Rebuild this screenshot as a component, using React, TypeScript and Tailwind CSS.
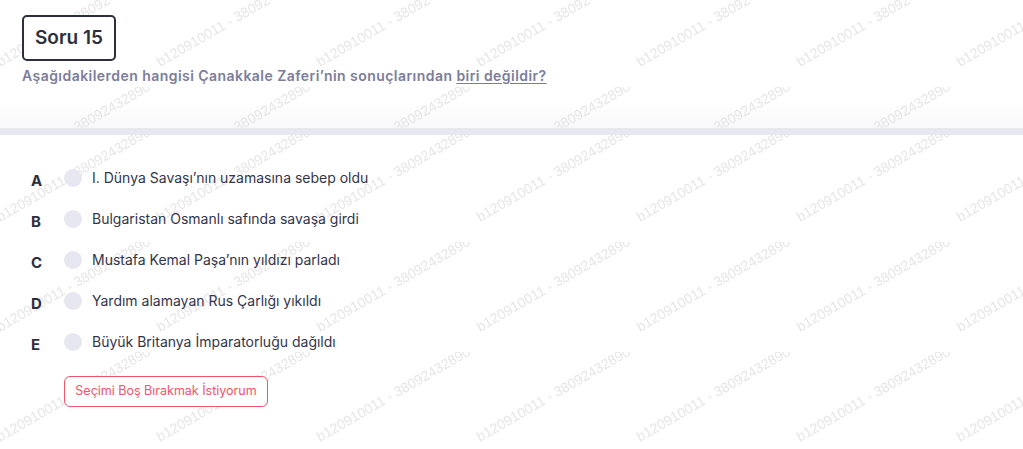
const options = [
  { key: "A", text: "I. Dünya Savaşı’nın uzamasına sebep oldu" },
  { key: "B", text: "Bulgaristan Osmanlı safında savaşa girdi" },
  { key: "C", text: "Mustafa Kemal Paşa’nın yıldızı parladı" },
  { key: "D", text: "Yardım alamayan Rus Çarlığı yıkıldı" },
  { key: "E", text: "Büyük Britanya İmparatorluğu dağıldı" },
];

function Watermark({ id, offsetY }: { id: string; offsetY: number }) {
  return (
    <svg className="pointer-events-none absolute inset-0 h-full w-full" aria-hidden="true">
      <defs>
        <pattern id={id} width="160" height="110" patternUnits="userSpaceOnUse" x="-5" y={offsetY}>
          <text
            transform="translate(5 90) rotate(-30)"
            fontSize="14"
            fill="#e6e6e6"
            fontFamily="'Liberation Sans', Arial, sans-serif"
          >
            b120910011 - 38092432890
          </text>
        </pattern>
      </defs>
      <rect width="100%" height="100%" fill={`url(#${id})`} />
    </svg>
  );
}

export default function App() {
  return (
    <div className="flex min-h-screen flex-col bg-white font-['Inter',sans-serif]">
      <div className="relative h-[128px] bg-gradient-to-b from-white from-[78%] to-[#f8f8fa]">
        <Watermark id="wm-head" offsetY={-23} />
        <div className="relative px-[22px] pt-[15px]">
          <div className="inline-flex h-[46px] items-center rounded-[5px] border-2 border-[#2d2f3e] bg-white px-[11px] text-[19px] font-semibold text-[#2d2f3e]">
            Soru 15
          </div>
          <p className="mt-[5px] text-[14px] font-semibold leading-[20px] tracking-[0.45px] text-[#7b7d9b]">
            Aşağıdakilerden hangisi Çanakkale Zaferi’nin sonuçlarından{" "}
            <span className="underline underline-offset-2">biri değildir?</span>
          </p>
        </div>
      </div>

      <div className="h-[7px] bg-[#e6e7f1]" />

      <div className="relative flex-1 bg-white">
        <Watermark id="wm-body" offsetY={-3} />
        <div className="relative pl-[31px] pt-[22px]">
          {options.map((o) => (
            <div key={o.key} className="flex h-[41px] items-center">
              <span className="w-[33px] pt-[8px] text-[15px] font-bold text-[#2d2f3e]">{o.key}</span>
              <span className="h-[18px] w-[18px] rounded-full bg-[#e6e7f1]" />
              <span className="ml-[10px] text-[14px] text-[#33354a]">{o.text}</span>
            </div>
          ))}
          <button
            type="button"
            className="ml-[33px] mt-[14px] h-[31px] w-[204px] rounded-[6px] border border-[#f0566a] bg-white text-[12.5px] text-[#f0566a]"
          >
            Seçimi Boş Bırakmak İstiyorum
          </button>
        </div>
      </div>
    </div>
  );
}
